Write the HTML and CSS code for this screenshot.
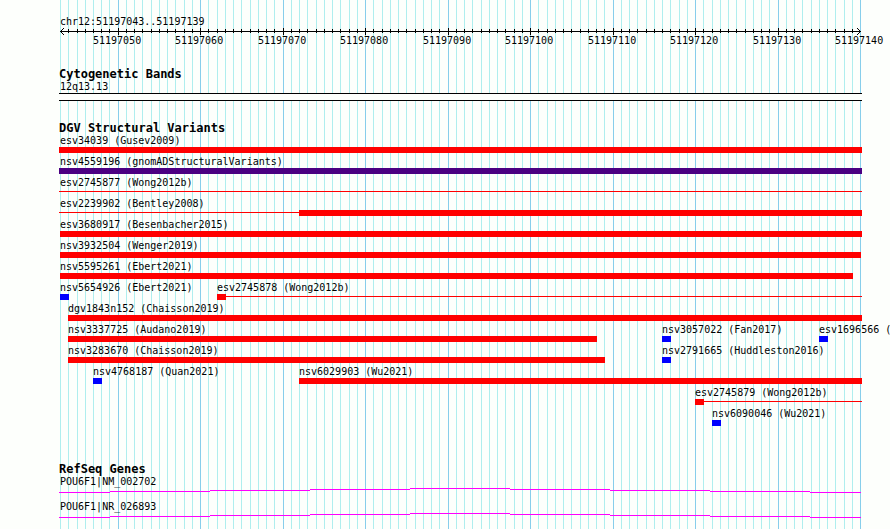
FILE: index.html
```
<!DOCTYPE html>
<html lang="en">
<head>
  <meta charset="UTF-8">
  <meta name="viewport" content="width=device-width, initial-scale=1.0">
  <title>chr12:51197043..51197139</title>
  <link rel="stylesheet" href="styles.css">
</head>
<body>
  <main class="browser">
    <svg class="grid" id="grid"></svg>

    <header class="ruler">
      <p class="label">chr12:51197043..51197139</p>
      <svg class="scale" id="scale"></svg>
      <div class="ticks" id="ticks"></div>
    </header>

    <section class="bands">
      <h2>Cytogenetic Bands</h2>
      <p class="label">12q13.13</p>
      <div class="band"></div>
    </section>

    <section class="variants">
      <h2>DGV Structural Variants</h2>
      <div id="variants"></div>
    </section>

    <section class="genes">
      <h2>RefSeq Genes</h2>
      <div class="gene">
        <p class="label">POU6F1|NM_002702</p>
        <svg class="intron"></svg>
      </div>
      <div class="gene">
        <p class="label">POU6F1|NR_026893</p>
        <svg class="intron"></svg>
      </div>
    </section>
  </main>

  <script src="script.js"></script>
</body>
</html>
```
FILE: styles.css
```
* {
  box-sizing: border-box;
}

body {
  margin: 0;
  background: #fdfffc;
  color: #000;
  font-family: "DejaVu Sans Mono", "Liberation Mono", monospace;
  font-size: 10px;
  line-height: 12px;
}

h2,
p {
  margin: 0;
}

h2 {
  font-size: 12px;
  line-height: 13px;
}

svg {
  display: block;
  width: 100%;
  shape-rendering: crispEdges;
}

.browser {
  position: relative;
  z-index: 0;
  min-height: 100vh;
  padding: 16px 28px 0 59px;
  overflow: hidden;
}

/* guide lines run behind every track */
.grid {
  position: absolute;
  top: 0;
  left: 0;
  height: 100%;
  z-index: -1;
}

.label {
  padding-left: 1px;
  white-space: nowrap;
}

.minor {
  fill: #afeeee;
}

.major {
  fill: #87ceeb;
}

.scale {
  height: 7px;
}

.ticks {
  position: relative;
  height: 12px;
}

.ticks span {
  position: absolute;
  margin-left: -25px;
}

.bands {
  margin-top: 21px;
}

.band {
  height: 8px;
  border: solid #000;
  border-width: 1px 0;
  background: #fdfffc;
}

.variants {
  margin-top: 21px;
}

.row {
  position: relative;
  height: 21px;
}

.feature {
  position: absolute;
  top: 0;
}

.bar {
  display: block;
  height: 6px;
  background: #f00;
}

.gain .bar {
  background: #00f;
}

.complex .bar {
  background: #4b0082;
}

.range {
  position: absolute;
  top: 14px;
  height: 1px;
  background: #f00;
}

.genes {
  margin-top: 34px;
}

.gene {
  height: 25px;
}

.intron {
  height: 5px;
  fill: #f0f;
}
```
FILE: script.js
```
const START = 51197043;
const END = 51197140;
const GUTTER = 59;

// from/to are bases after START, -1 and 98 stand for features running off the view
const rows = [
  [{ name: 'esv34039 (Gusev2009)', from: -1, to: 98 }],
  [{ name: 'nsv4559196 (gnomADStructuralVariants)', from: -1, to: 98, type: 'complex' }],
  [{ name: 'esv2745877 (Wong2012b)', from: -1, to: -1, line: [-1, 98] }],
  [{ name: 'esv2239902 (Bentley2008)', from: 29, to: 98, line: [-1, 29], labelAt: -1 }],
  [{ name: 'esv3680917 (Besenbacher2015)', from: 0, to: 98 }],
  [{ name: 'nsv3932504 (Wenger2019)', from: 0, to: 97 }],
  [{ name: 'nsv5595261 (Ebert2021)', from: 0, to: 96 }],
  [
    { name: 'nsv5654926 (Ebert2021)', from: 0, to: 1, type: 'gain' },
    { name: 'esv2745878 (Wong2012b)', from: 19, to: 20, line: [20, 98] }
  ],
  [{ name: 'dgv1843n152 (Chaisson2019)', from: 1, to: 98 }],
  [
    { name: 'nsv3337725 (Audano2019)', from: 1, to: 65 },
    { name: 'nsv3057022 (Fan2017)', from: 73, to: 74, type: 'gain' },
    { name: 'esv1696566 (', from: 92, to: 93, type: 'gain' }
  ],
  [
    { name: 'nsv3283670 (Chaisson2019)', from: 1, to: 66 },
    { name: 'nsv2791665 (Huddleston2016)', from: 73, to: 74, type: 'gain' }
  ],
  [
    { name: 'nsv4768187 (Quan2021)', from: 4, to: 5, type: 'gain' },
    { name: 'nsv6029903 (Wu2021)', from: 29, to: 98 }
  ],
  [{ name: 'esv2745879 (Wong2012b)', from: 77, to: 78, line: [78, 98] }],
  [{ name: 'nsv6090046 (Wu2021)', from: 79, to: 80, type: 'gain' }]
];

const rect = (x, y, w, h, cls = '') =>
  `<rect x="${x}" y="${y}" width="${w}" height="${h}" class="${cls}"/>`;

function draw() {
  const scale = document.getElementById('scale');
  const width = Math.round(scale.getBoundingClientRect().width);
  const step = (width - 3) / (END - START);
  const px = (k) => Math.floor(1.51 + k * step);
  const left = (k) => (k < 0 ? 0 : px(k));
  const right = (k) => (k < 0 ? 0 : Math.min(px(k) + 1, width));

  let grid = '';
  let marks = rect(1, 3, width - 2, 1);
  let ticks = '';
  for (let k = 0; k <= END - START; k++) {
    const major = (START + k) % 10 === 0;
    grid += rect(px(k) + GUTTER, 0, 1, '100%', major ? 'major' : 'minor');
    if (k > 0 && k < END - START) {
      marks += major ? rect(px(k), 0, 1, 7) : rect(px(k), 1, 1, 4);
    }
    if (major) {
      ticks += `<span style="left:${px(k)}px">${START + k}</span>`;
    }
  }
  // arrow heads, drawn as a pixel staircase
  for (let i = 0; i < 4; i++) {
    marks += rect(1 + i, 3 - i, 1, 1) + rect(1 + i, 3 + i, 1, 1);
    marks += rect(width - 2 - i, 3 - i, 1, 1) + rect(width - 2 - i, 3 + i, 1, 1);
  }
  document.getElementById('grid').innerHTML = grid;
  scale.innerHTML = marks;
  document.getElementById('ticks').innerHTML = ticks;

  document.getElementById('variants').innerHTML = rows.map((row) => {
    const items = row.map((f) => {
      const x = left(f.from);
      const w = right(f.to) - x;
      let html = '';
      if (f.line) {
        const lx = left(f.line[0]);
        html += `<span class="range" style="left:${lx}px;width:${right(f.line[1]) - lx}px"></span>`;
      }
      const labelX = f.labelAt === undefined ? Math.max(x - 1, 0) : left(f.labelAt);
      html += `<div class="feature ${f.type || ''}" style="left:${labelX}px">` +
        `<p class="label">${f.name}</p>` +
        `<span class="bar" style="width:${w}px;margin-left:${x - labelX}px"></span></div>`;
      return html;
    });
    return `<div class="row">${items.join('')}</div>`;
  }).join('');

  // introns are a shallow arch, one pixel per step
  const levels = [4, 3, 2, 1, 0, 1, 2, 3, 4];
  const edge = (i) => {
    if (i === 0) return 0;
    if (i === levels.length) return width - 1;
    return Math.floor((i - 0.5) * (width - 3) / 8) + 1;
  };
  document.querySelectorAll('.intron').forEach((svg) => {
    svg.innerHTML = levels.map((y, i) => rect(edge(i), y, edge(i + 1) - edge(i), 1)).join('');
  });
}

draw();
window.addEventListener('resize', draw);
```
